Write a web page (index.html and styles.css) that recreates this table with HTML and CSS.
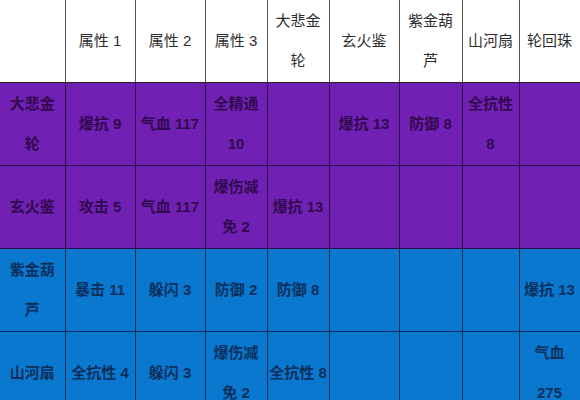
FILE: index.html
```html
<!DOCTYPE html>
<html lang="zh">
<head>
<meta charset="utf-8">
<link rel="stylesheet" href="styles.css">
</head>
<body>
<table class="grid">
  <colgroup>
    <col class="c0"><col class="c1"><col class="c2"><col class="c3"><col class="c4"><col class="c5"><col class="c6"><col class="c7"><col class="c8">
  </colgroup>
  <tr class="head">
    <td></td>
    <td>属性 1</td>
    <td>属性 2</td>
    <td>属性 3</td>
    <td>大悲金<br>轮</td>
    <td>玄火鉴</td>
    <td>紫金葫<br>芦</td>
    <td>山河扇</td>
    <td>轮回珠</td>
  </tr>
  <tr class="purple">
    <td>大悲金<br>轮</td>
    <td>爆抗 9</td>
    <td>气血 117</td>
    <td>全精通<br>10</td>
    <td></td>
    <td>爆抗 13</td>
    <td>防御 8</td>
    <td>全抗性<br>8</td>
    <td></td>
  </tr>
  <tr class="purple">
    <td>玄火鉴</td>
    <td>攻击 5</td>
    <td>气血 117</td>
    <td>爆伤减<br>免 2</td>
    <td>爆抗 13</td>
    <td></td>
    <td></td>
    <td></td>
    <td></td>
  </tr>
  <tr class="blue">
    <td>紫金葫<br>芦</td>
    <td>暴击 11</td>
    <td>躲闪 3</td>
    <td>防御 2</td>
    <td>防御 8</td>
    <td></td>
    <td></td>
    <td></td>
    <td>爆抗 13</td>
  </tr>
  <tr class="blue">
    <td>山河扇</td>
    <td>全抗性 4</td>
    <td>躲闪 3</td>
    <td>爆伤减<br>免 2</td>
    <td>全抗性 8</td>
    <td></td>
    <td></td>
    <td></td>
    <td>气血<br>275</td>
  </tr>
</table>
</body>
</html>
```

FILE: styles.css
```css
html, body {
  margin: 0;
  padding: 0;
  background: #ffffff;
  overflow: hidden;
}
.grid {
  width: 580px;
  border-collapse: collapse;
  table-layout: fixed;
  font-family: "Liberation Sans", "Noto Sans CJK SC", sans-serif;
  font-size: 15px;
  line-height: 40px;
}
.c0 { width: 65px; }
.c1 { width: 70px; }
.c2 { width: 70px; }
.c3 { width: 62px; }
.c4 { width: 62px; }
.c5 { width: 70px; }
.c6 { width: 63px; }
.c7 { width: 57px; }
.c8 { width: 61px; }
.grid td {
  height: 82px;
  padding: 0;
  text-align: center;
  vertical-align: middle;
  white-space: nowrap;
  border: 1px solid #3a3a3a;
}
.grid tr td:first-child { border-left: none; }
.head td {
  border-top: none;
  color: #2e2e2e;
  background: #ffffff;
  border-color: #555555;
}
.purple td {
  background: #7021b4;
  color: #32094f;
  border-color: #2a0b4c;
  font-weight: 700;
}
.blue td {
  background: #0a78cf;
  color: #0b2f5c;
  border-color: #0d2a5a;
  font-weight: 700;
}
.head td { border-bottom-color: #222222; }
```
